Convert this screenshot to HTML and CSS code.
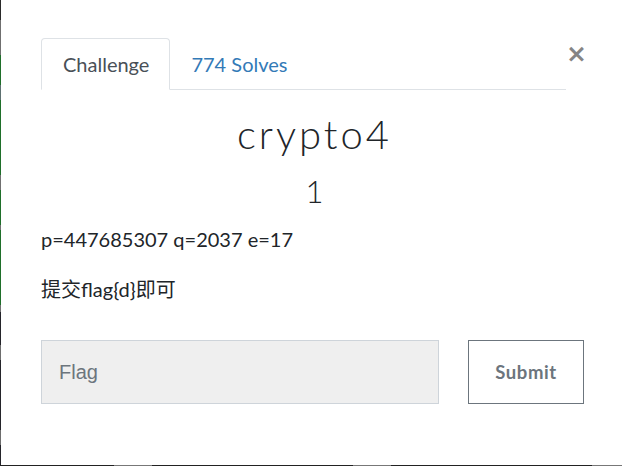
FILE: index.html
```html
<!DOCTYPE html>
<html>
<head>
<meta charset="utf-8">
<link rel="stylesheet" href="styles.css">
</head>
<body>
<div class="screen">
  <div class="backdrop-strip"></div>
  <div class="modal">
    <div class="modal-top">
      <ul class="tabs">
        <li class="tab active">Challenge</li>
        <li class="tab link">774 Solves</li>
      </ul>
      <button class="close" type="button">&times;</button>
    </div>
    <h2 class="title">crypto4</h2>
    <h3 class="value">1</h3>
    <div class="desc">
      <p>p=447685307 q=2037 e=17</p>
      <p>提交flag{d}即可</p>
    </div>
    <form class="submit-row">
      <input class="flag-input" type="text" placeholder="Flag">
      <button class="submit-btn" type="button">Submit</button>
    </form>
  </div>
</div>
<div class="bottom-edge"></div>
</body>
</html>
```
FILE: styles.css
```css
html, body {
  margin: 0;
  padding: 0;
  background: #fff;
}
body {
  width: 622px;
  height: 466px;
  overflow: hidden;
  font-family: Lato, "Noto Sans CJK SC", sans-serif;
  color: #212529;
}
.screen {
  display: flex;
  height: 465px;
}
.backdrop-strip {
  width: 1px;
  flex: none;
  background: linear-gradient(to bottom,
    #2a2a2a 0, #2a2a2a 20px,
    #6f6f6f 20px, #6f6f6f 55px,
    #1f6f2a 55px, #1f6f2a 85px,
    #5d7070 85px, #5d7070 100px,
    #1f6f2a 100px, #1f6f2a 175px,
    #707070 175px, #707070 190px,
    #1f6f2a 190px, #1f6f2a 225px,
    #707070 225px, #707070 230px,
    #1f6f2a 230px, #1f6f2a 305px,
    #707070 305px, #707070 312px,
    #24242a 312px, #24242a 345px,
    #6d6d6d 345px, #6d6d6d 360px,
    #24242a 360px, #24242a 430px,
    #6d6d6d 430px, #6d6d6d 445px,
    #24242a 445px);
}
.bottom-edge {
  height: 1px;
  background: linear-gradient(to right,
    #222 0, #222 114px,
    #777 114px, #777 152px,
    #222 152px, #222 353px,
    #777 353px, #777 391px,
    #222 391px, #222 592px,
    #777 592px);
}
.modal {
  flex: 1;
  background: #fff;
  padding: 38px 38px 0 40px;
  box-sizing: border-box;
  display: flex;
  flex-direction: column;
}
.modal-top {
  display: flex;
  align-items: flex-start;
}
.tabs {
  list-style: none;
  margin: 0;
  padding: 0;
  display: flex;
  width: 525px;
  border-bottom: 1px solid #dee2e6;
}
.tab {
  font-size: 20px;
  height: 51px;
  box-sizing: border-box;
  padding: 0 20px 0 21px;
  display: flex;
  align-items: center;
  border: 1px solid transparent;
  border-top-left-radius: 4px;
  border-top-right-radius: 4px;
  margin-bottom: -1px;
}
.tab.active {
  color: #495057;
  border-color: #dee2e6 #dee2e6 #fff;
  background: #fff;
  height: 52px;
}
.tab.link {
  color: #337ab7;
  padding-left: 20px;
}
.close {
  margin-left: auto;
  margin-right: 2px;
  margin-top: 1px;
  background: none;
  border: 0;
  padding: 0;
  font-family: "DejaVu Sans", sans-serif;
  font-weight: bold;
  font-size: 25px;
  line-height: 30px;
  color: #858585;
  width: 20px;
}
.title {
  margin: 20px 0 0;
  text-align: center;
  font-weight: 300;
  font-size: 40px;
  line-height: 48px;
  letter-spacing: 3px;
}
.value {
  margin: 13px 0 0;
  text-align: center;
  font-weight: 300;
  font-size: 31px;
  line-height: 40px;
}
.desc {
  margin-top: 15px;
  font-size: 20px;
  line-height: 26px;
}
.desc p {
  margin: 0 0 24px;
}
.submit-row {
  margin: 14px 0 0;
  display: flex;
  gap: 29px;
}
.flag-input {
  width: 398px;
  height: 64px;
  box-sizing: border-box;
  background: #efefef;
  border: 1px solid #ced4da;
  padding: 0 17px;
  font-family: "Liberation Sans", Arial, sans-serif;
  font-size: 20px;
  color: #495057;
  outline: none;
}
.flag-input::placeholder {
  color: #6c757d;
}
.submit-btn {
  width: 116px;
  height: 64px;
  box-sizing: border-box;
  background: #fff;
  border: 1px solid #6c757d;
  font-family: Lato, sans-serif;
  font-weight: bold;
  font-size: 18.5px;
  letter-spacing: 0.6px;
  color: #6c757d;
}
```
